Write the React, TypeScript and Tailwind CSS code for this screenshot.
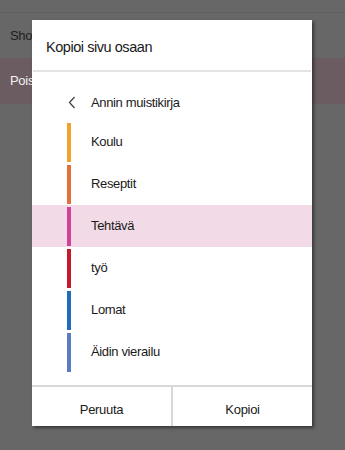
const sections = [
  { name: "Koulu", color: "bg-[#f0a22a]" },
  { name: "Reseptit", color: "bg-[#e2703a]" },
  { name: "Tehtävä", color: "bg-[#d2409a]", selected: true },
  { name: "työ", color: "bg-[#c41a2c]" },
  { name: "Lomat", color: "bg-[#1f6dbb]" },
  { name: "Äidin vierailu", color: "bg-[#5b7bc2]" },
];

export default function App() {
  return (
    <div className="relative h-[450px] w-[345px] overflow-hidden bg-[#676767] font-['Liberation_Sans',Arial,sans-serif]">
      {/* page behind the dialog, clipped at the dialog edge */}
      <div className="h-[13px] border-b border-[#5f5f5f]" />
      <div className="flex h-[45px] items-center">
        <div className="w-[32px] overflow-hidden whitespace-nowrap pl-[10px] text-[13px] tracking-[-0.3px] text-[#1e1e1e]">
          Shop
        </div>
      </div>
      <div className="flex h-[46px] items-center bg-[#6b5c62]">
        <div className="w-[32px] overflow-hidden whitespace-nowrap pl-[10px] text-[13px] tracking-[-0.3px] text-[#f2f2f2]">
          Poist
        </div>
      </div>

      {/* dialog */}
      <div className="absolute left-[32px] top-[20px] flex h-[406px] w-[280px] flex-col bg-white shadow-[2px_2px_3px_rgba(0,0,0,0.45)]">
        <div className="flex h-[50px] items-center px-[14px] pt-[6px] text-[14.5px] tracking-[-0.45px] text-[#1a1a1a]">
          Kopioi sivu osaan
        </div>
        <div className="mx-[1px] h-[2px] bg-[#e3e3e3]" />

        <div className="flex-1 text-[13px] tracking-[-0.35px] text-[#1a1a1a]">
          <div className="flex h-[49px] items-center pl-[36px] pt-[12px]">
            <svg width="8" height="13" viewBox="0 0 8 13" className="mr-[15px]">
              <path d="M6.5 1 1.5 6.5 6.5 12" fill="none" stroke="#444" strokeWidth="1.3" />
            </svg>
            Annin muistikirja
          </div>
          {sections.map((s) => (
            <div
              key={s.name}
              className={`flex h-[42px] items-center ${s.selected ? "bg-[#f2dbe7]" : ""}`}
            >
              <div className="flex h-full items-center py-[1.5px] pl-[35px]">
                <div className={`h-full w-[4px] ${s.color}`} />
              </div>
              <span className="pl-[20px]">{s.name}</span>
            </div>
          ))}
        </div>

        <div className="flex h-[41px] border-t-2 border-[#d8d8d8] text-[13px] tracking-[-0.3px] text-[#1a1a1a]">
          <div className="flex flex-1 items-center justify-center border-r-2 border-[#d8d8d8] pt-[6px]">
            Peruuta
          </div>
          <div className="flex flex-1 items-center justify-center pt-[6px]">Kopioi</div>
        </div>
      </div>
    </div>
  );
}
